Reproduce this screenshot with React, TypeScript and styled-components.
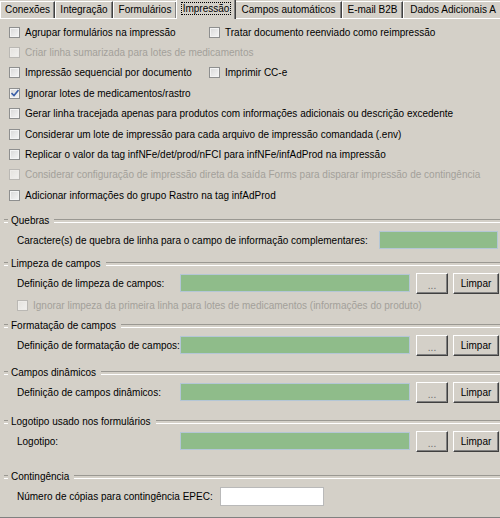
import React from "react";
import styled, { createGlobalStyle, css } from "styled-components";

const Global = createGlobalStyle`
  html, body { margin: 0; padding: 0; background: #d4d0c8; }
  * { box-sizing: border-box; }
`;

const Window = styled.div`
  width: 500px;
  height: 518px;
  background: #d4d0c8;
  font-family: "Liberation Sans", Arial, sans-serif;
  font-size: 10px;
  color: #000;
  overflow: hidden;
  display: flex;
  flex-direction: column;
`;

const TabStrip = styled.div`
  display: flex;
  align-items: flex-end;
  height: 19px;
  border-bottom: 1px solid #fff;
  flex: none;
`;

const Tab = styled.div<{ $w: number; $active?: boolean }>`
  width: ${(p) => p.$w}px;
  flex: none;
  height: 17px;
  line-height: 15px;
  text-align: center;
  white-space: nowrap;
  overflow: hidden;
  border-top: 1px solid #fff;
  border-left: 1px solid #fff;
  border-right: 1px solid #404040;
  box-shadow: inset -1px 0 0 #808080;
  ${(p) =>
    p.$active &&
    css`
      height: 20px;
      margin: 0 -1px -1px -1px;
      line-height: 17px;
      position: relative;
      z-index: 1;
      background: #d4d0c8;
    `}
`;

const FocusText = styled.span`
  outline: 1px dotted #000;
  outline-offset: 0;
  padding: 0 1px;
`;

const Panel = styled.div`
  flex: 1;
  display: flex;
  flex-direction: column;
  padding-top: 3px;
  border-bottom: 1px solid #808080;
`;

const CheckRow = styled.div<{ $indent?: number }>`
  height: 20.4px;
  display: flex;
  align-items: center;
  padding-left: ${(p) => p.$indent ?? 9}px;
`;

const CheckItem = styled.label<{ $w?: number; $disabled?: boolean }>`
  display: flex;
  align-items: center;
  gap: 5px;
  white-space: nowrap;
  ${(p) => (p.$w ? `width: ${p.$w}px; flex: none;` : "")}
  color: ${(p) => (p.$disabled ? "#a3a09a" : "#000")};
`;

const Box = styled.span<{ $disabled?: boolean }>`
  width: 11px;
  height: 11px;
  flex: none;
  display: flex;
  align-items: center;
  justify-content: center;
  border: 1px solid ${(p) => (p.$disabled ? "#bab8b4" : "#8e8f8f")};
  background: ${(p) =>
    p.$disabled
      ? "linear-gradient(135deg, #e4e2de, #f2f1ef)"
      : "linear-gradient(135deg, #d8d8d8, #f6f6f6)"};
  box-shadow: inset 0 0 0 1px ${(p) => (p.$disabled ? "#eeece9" : "#f4f4f4")};
`;

const Group = styled.div<{ $mt: number }>`
  display: flex;
  flex-direction: column;
  row-gap: 2px;
  margin-top: ${(p) => p.$mt}px;
`;

const GroupHeader = styled.div`
  height: 14px;
  display: flex;
  align-items: center;
  padding-left: 4px;
  &::before,
  &::after {
    content: "";
    height: 2px;
    border-top: 1px solid #9a9892;
    border-bottom: 1px solid #fff;
  }
  &::before {
    width: 4px;
    flex: none;
  }
  &::after {
    flex: 1;
    margin-left: 5px;
  }
`;

const GroupTitle = styled.span`
  padding-left: 3px;
  white-space: nowrap;
`;

const FieldRow = styled.div`
  height: 21px;
  display: flex;
  align-items: center;
  padding-left: 17px;
`;

const FieldLabel = styled.span<{ $w: number }>`
  width: ${(p) => p.$w}px;
  flex: none;
  white-space: nowrap;
`;

const GreenInput = styled.div<{ $w: number }>`
  width: ${(p) => p.$w}px;
  height: 18px;
  flex: none;
  background: #8fbc8a;
  border: 1px solid #b4c6d6;
`;

const WhiteInput = styled.div`
  width: 104px;
  height: 19px;
  flex: none;
  background: #fff;
  border: 1px solid #b9b9b9;
`;

const Button = styled.button<{ $w: number; $ml: number; $dots?: boolean }>`
  width: ${(p) => p.$w}px;
  height: 21px;
  margin-left: ${(p) => p.$ml}px;
  flex: none;
  padding: 0;
  background: #d4d0c8;
  font-family: inherit;
  font-size: 10px;
  color: ${(p) => (p.$dots ? "#6a6a6a" : "#000")};
  border-top: 1px solid #fff;
  border-left: 1px solid #fff;
  border-right: 1px solid #404040;
  border-bottom: 1px solid #404040;
  box-shadow: inset -1px -1px 0 #808080;
  line-height: ${(p) => (p.$dots ? "24px" : "17px")};
  display: block;
  text-align: center;
`;

const Check = ({ checked }: { checked?: boolean }) => (
  <svg width="8" height="8" viewBox="0 0 8 8">
    {checked && (
      <path d="M0.5 4 L3 6.5 L7.5 1" fill="none" stroke="#3a5fa8" strokeWidth="1.6" />
    )}
  </svg>
);

type CB = { text: string; disabled?: boolean; checked?: boolean; w?: number };

const CheckBox = ({ text, disabled, checked, w }: CB) => (
  <CheckItem $w={w} $disabled={disabled}>
    <Box $disabled={disabled}>
      <Check checked={checked} />
    </Box>
    {text}
  </CheckItem>
);

const tabs = [
  { t: "Conexões", w: 55 },
  { t: "Integração", w: 58 },
  { t: "Formulários", w: 64 },
  { t: "Impressão", w: 60, active: true },
  { t: "Campos automáticos", w: 107 },
  { t: "E-mail B2B", w: 61 },
  { t: "Dados Adicionais A", w: 100 },
];

const rows: CB[][] = [
  [
    { text: "Agrupar formulários na impressão", w: 200 },
    { text: "Tratar documento reenviado como reimpressão" },
  ],
  [{ text: "Criar linha sumarizada para lotes de medicamentos", disabled: true }],
  [
    { text: "Impressão sequencial por documento", w: 200 },
    { text: "Imprimir CC-e" },
  ],
  [{ text: "Ignorar lotes de medicamentos/rastro", checked: true }],
  [{ text: "Gerar linha tracejada apenas para produtos com informações adicionais ou descrição excedente" }],
  [{ text: "Considerar um lote de impressão para cada arquivo de impressão comandada (.env)" }],
  [{ text: "Replicar o valor da tag infNFe/det/prod/nFCI para infNFe/infAdProd na impressão" }],
  [
    {
      text: "Considerar configuração de impressão direta da saída Forms para disparar impressão de contingência",
      disabled: true,
    },
  ],
  [{ text: "Adicionar informações do grupo Rastro na tag infAdProd" }],
];

const PickRow = ({ label }: { label: string }) => (
  <FieldRow>
    <FieldLabel $w={163}>{label}</FieldLabel>
    <GreenInput $w={230} />
    <Button $w={32} $ml={6} $dots>
      ...
    </Button>
    <Button $w={46} $ml={5}>
      Limpar
    </Button>
  </FieldRow>
);

export default function App() {
  return (
    <Window>
      <Global />
      <TabStrip>
        {tabs.map((t) => (
          <Tab key={t.t} $w={t.w} $active={t.active}>
            {t.active ? <FocusText>{t.t}</FocusText> : t.t}
          </Tab>
        ))}
      </TabStrip>
      <Panel>
        {rows.map((r, i) => (
          <CheckRow key={i}>
            {r.map((c) => (
              <CheckBox key={c.text} {...c} />
            ))}
          </CheckRow>
        ))}

        <Group $mt={8}>
          <GroupHeader>
            <GroupTitle>Quebras</GroupTitle>
          </GroupHeader>
          <FieldRow>
            <FieldLabel $w={362}>
              Caractere(s) de quebra de linha para o campo de informação complementares:
            </FieldLabel>
            <GreenInput $w={119} />
          </FieldRow>
        </Group>

        <Group $mt={6}>
          <GroupHeader>
            <GroupTitle>Limpeza de campos</GroupTitle>
          </GroupHeader>
          <PickRow label="Definição de limpeza de campos:" />
          <CheckRow $indent={17}>
            <CheckBox
              disabled
              text="Ignorar limpeza da primeira linha para lotes de medicamentos (informações do produto)"
            />
          </CheckRow>
        </Group>

        <Group $mt={3}>
          <GroupHeader>
            <GroupTitle>Formatação de campos</GroupTitle>
          </GroupHeader>
          <PickRow label="Definição de formatação de campos:" />
        </Group>

        <Group $mt={10}>
          <GroupHeader>
            <GroupTitle>Campos dinâmicos</GroupTitle>
          </GroupHeader>
          <PickRow label="Definição de campos dinâmicos:" />
        </Group>

        <Group $mt={12}>
          <GroupHeader>
            <GroupTitle>Logotipo usado nos formulários</GroupTitle>
          </GroupHeader>
          <PickRow label="Logotipo:" />
        </Group>

        <Group $mt={18}>
          <GroupHeader>
            <GroupTitle>Contingência</GroupTitle>
          </GroupHeader>
          <FieldRow>
            <FieldLabel $w={203}>Número de cópias para contingência EPEC:</FieldLabel>
            <WhiteInput />
          </FieldRow>
        </Group>
      </Panel>
    </Window>
  );
}
